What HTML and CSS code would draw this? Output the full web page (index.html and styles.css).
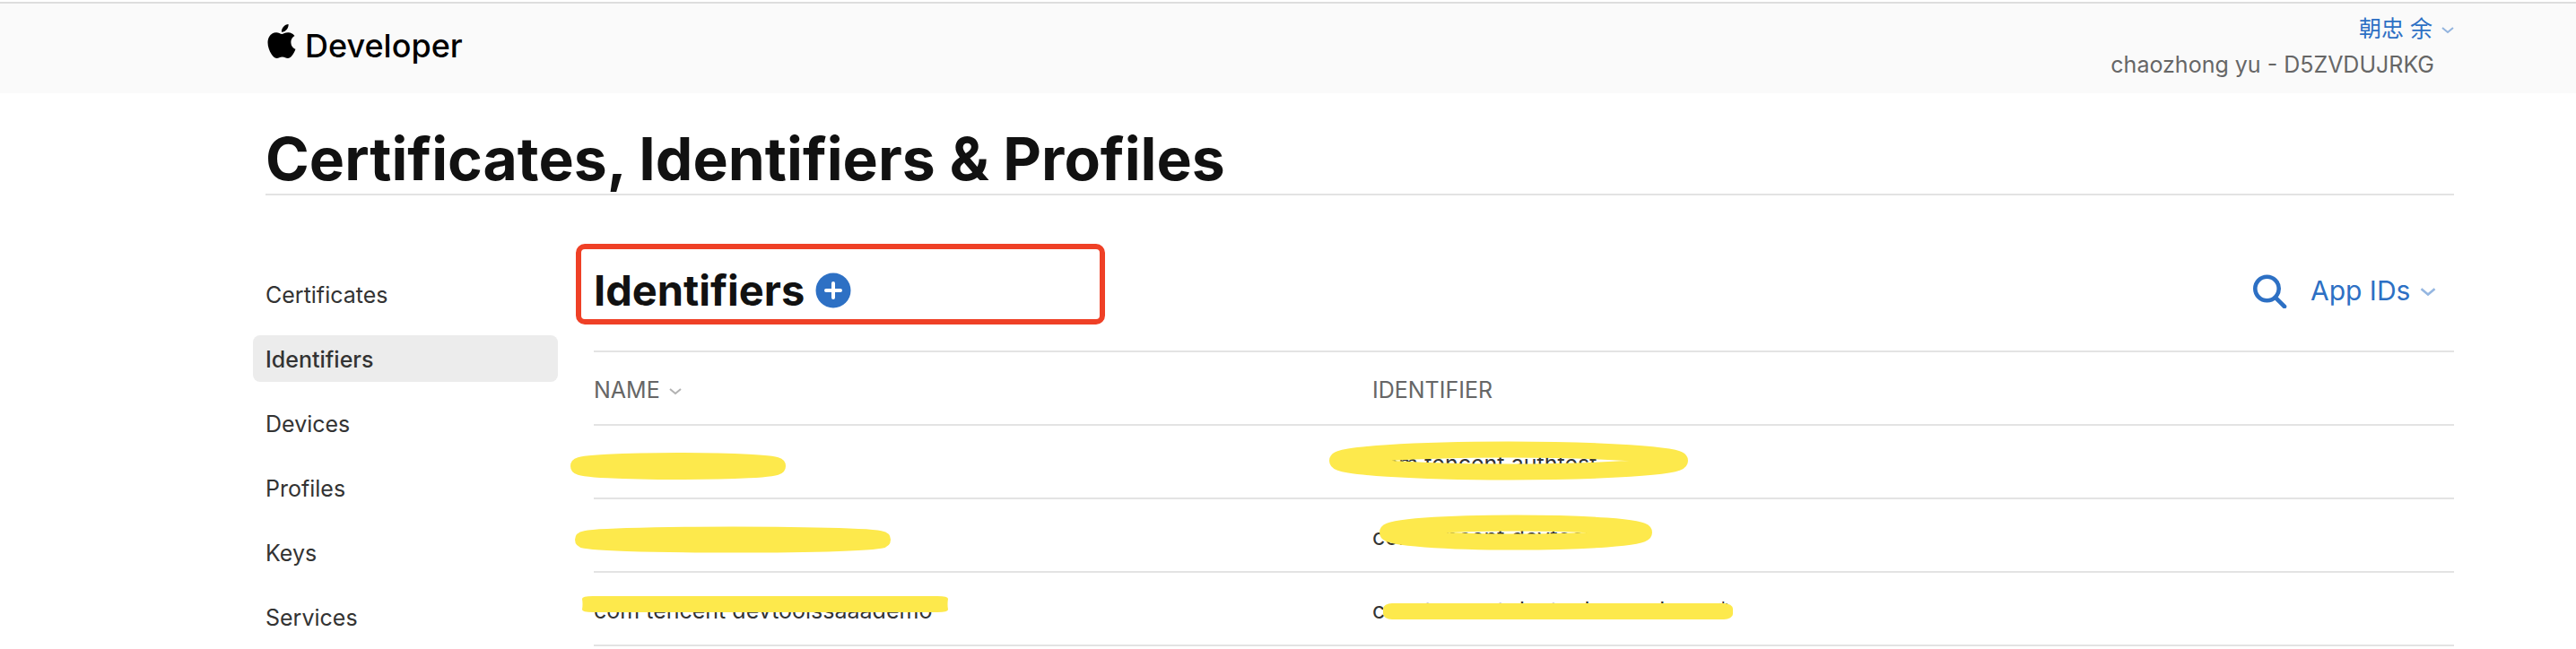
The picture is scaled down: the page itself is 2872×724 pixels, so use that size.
FILE: index.html
```html
<!DOCTYPE html>
<html lang="en">
  <head>
    <meta charset="UTF-8" />
    <title>Certificates, Identifiers &amp; Profiles - Apple Developer</title>
    <link rel="stylesheet" href="styles.css">
  </head>
  <body>
    <header class="topbar">
      <a class="brand" href="#">
        <svg class="brand-logo" viewBox="2 0 20 24" aria-hidden="true">
          <path d="M12.152 6.896c-.948 0-2.415-1.078-3.96-1.04-2.04.027-3.91 1.183-4.961 3.014-2.117 3.675-.546 9.103 1.519 12.09 1.013 1.454 2.208 3.09 3.792 3.039 1.52-.065 2.09-.987 3.935-.987 1.831 0 2.35.987 3.96.948 1.637-.026 2.676-1.48 3.676-2.948 1.156-1.688 1.636-3.325 1.662-3.415-.039-.013-3.182-1.221-3.22-4.857-.026-3.04 2.48-4.494 2.597-4.559-1.429-2.09-3.623-2.324-4.39-2.376-2-.156-3.675 1.09-4.61 1.09zM15.53 3.83c.843-1.012 1.4-2.427 1.245-3.83-1.207.052-2.662.805-3.532 1.818-.78.896-1.454 2.338-1.273 3.714 1.338.104 2.715-.688 3.559-1.701" />
        </svg>
        <span class="brand-name">Developer</span>
      </a>
      <div class="account">
        <button class="account-name" type="button">
          <span lang="zh">朝忠 余</span>
          <svg class="chevron" viewBox="0 0 14 8" aria-hidden="true"><path d="M1 1l6 5 6-5" /></svg>
        </button>
        <div class="account-team">chaozhong yu - D5ZVDUJRKG</div>
      </div>
    </header>

    <div class="page">
      <h1 class="page-title">Certificates, Identifiers &amp; Profiles</h1>

      <div class="columns">
        <nav class="sidebar" aria-label="Resources">
          <a class="sidebar-link" href="#">Certificates</a>
          <a class="sidebar-link active" href="#" aria-current="page">Identifiers</a>
          <a class="sidebar-link" href="#">Devices</a>
          <a class="sidebar-link" href="#">Profiles</a>
          <a class="sidebar-link" href="#">Keys</a>
          <a class="sidebar-link" href="#">Services</a>
        </nav>

        <main class="content">
          <div class="toolbar">
            <div class="toolbar-title">
              <h2>Identifiers</h2>
              <button class="add-button" type="button" aria-label="Add identifier">
                <svg viewBox="0 0 40 40" aria-hidden="true">
                  <circle cx="20" cy="20" r="19.5" />
                  <path d="M20 12v16M12 20h16" />
                </svg>
              </button>
              <span class="highlight-box"></span>
            </div>
            <div class="toolbar-actions">
              <button class="search-button" type="button" aria-label="Search">
                <svg viewBox="0 0 40 40" aria-hidden="true">
                  <circle cx="17.5" cy="18" r="13.2" />
                  <path d="M27 28l10 10" />
                </svg>
              </button>
              <label class="filter">
                <select aria-label="Identifier type">
                  <option>App IDs</option>
                </select>
                <svg class="chevron large" viewBox="0 0 14 8" aria-hidden="true"><path d="M1 1l6 5 6-5" /></svg>
              </label>
            </div>
          </div>

          <table class="identifiers">
            <colgroup>
              <col class="col-name">
              <col>
            </colgroup>
            <thead>
              <tr>
                <th scope="col">
                  <button class="sort-button" type="button">
                    NAME
                    <svg class="chevron" viewBox="0 0 14 8" aria-hidden="true"><path d="M1 1l6 5 6-5" /></svg>
                  </button>
                </th>
                <th scope="col">IDENTIFIER</th>
              </tr>
            </thead>
            <tbody>
              <tr>
                <td>
                  <svg class="mark mark-name-1" viewBox="0 0 240 30"><ellipse cx="120" cy="15" rx="111" ry="6" /></svg>
                </td>
                <td>
                  com.tencent.authtest
                  <svg class="mark mark-id-1" viewBox="0 0 400 44"><ellipse class="ring" cx="200" cy="22" rx="191" ry="12.5" /></svg>
                </td>
              </tr>
              <tr>
                <td>
                  <svg class="mark mark-name-2" viewBox="0 0 352 30"><ellipse cx="176" cy="15" rx="167" ry="5.5" /></svg>
                </td>
                <td>
                  com.tencent.devtools
                  <svg class="mark mark-id-2" viewBox="0 0 304 40"><ellipse class="ring" cx="152" cy="20" rx="143" ry="10.5" /></svg>
                </td>
              </tr>
              <tr>
                <td>
                  com tencent devtoolssaaademo
                  <svg class="mark mark-name-3" viewBox="0 0 408 18"><path class="bar" d="M0 3Q0 0 12 0H396Q408 0 408 3Q407 9 408 15Q408 18 396 18H12Q0 18 0 15Q1 9 0 3z" /></svg>
                </td>
                <td>
                  com.tencent.devtoolssaaademo.*
                  <svg class="mark mark-id-3" viewBox="0 0 390 18"><rect class="bar" width="390" height="18" rx="10" ry="6" /></svg>
                </td>
              </tr>
            </tbody>
          </table>
        </main>
      </div>
    </div>
  </body>
</html>
```
FILE: styles.css
```css
:root {
  --bg-color: #ffffff;
  --header-bg: #fafafa;
  --title-color: #111111;
  --text-color: #333333;
  --muted-color: #666666;
  --border-color: #e3e3e3;
  --active-bg: #ececec;
  --link-color: #2d70c4;
  --highlight: #ef4026;
  --marker: #fde94c;

  --page-left: 296px;
  --page-right: 136px;

  --text-base: 25px;
  --text-md: 30px;
  --text-lg: 36px;
  --text-xl: 47px;
  --text-xxl: 66px;
}

* {
  box-sizing: border-box;
}

body {
  margin: 0;
  padding-top: 2px;
  font-family: Inter, "Noto Sans CJK SC", sans-serif;
  font-size: var(--text-base);
  line-height: 40px;
  background-color: var(--bg-color);
  color: var(--text-color);
}

button,
select {
  padding: 0;
  border: none;
  background: none;
  font: inherit;
  color: inherit;
  cursor: pointer;
}

a {
  color: inherit;
  text-decoration: none;
}

h1,
h2 {
  margin: 0;
  color: var(--title-color);
  font-weight: 700;
}

.chevron {
  width: 14px;
  height: 8px;
  margin-top: 4px;
  fill: none;
  stroke: currentColor;
  stroke-width: 2;
  opacity: 0.5;
}

.chevron.large {
  width: 18px;
  height: 10px;
}

/* Header */
.topbar {
  display: flex;
  justify-content: space-between;
  align-items: flex-start;
  min-height: 102px;
  padding: 8px var(--page-right) 8px var(--page-left);
  border-top: 2px solid #dddddd;
  background-color: var(--header-bg);
}

.brand {
  display: flex;
  align-items: flex-start;
  gap: 10px;
  padding: 15px 0 0 2px;
  font-size: var(--text-lg);
  font-weight: 500;
  color: #000000;
}

.brand-logo {
  width: 32px;
  height: 38px;
}

.brand-name {
  margin-top: 4px;
}

.account {
  display: flex;
  flex-direction: column;
  align-items: flex-end;
}

.account-name {
  display: flex;
  align-items: center;
  gap: 10px;
  color: var(--link-color);
}

.account-team {
  padding-right: 22px;
  color: var(--muted-color);
}

/* Page */
.page {
  padding: 36px var(--page-right) 0 var(--page-left);
}

.page-title {
  padding-bottom: 2px;
  border-bottom: 2px solid var(--border-color);
  font-size: var(--text-xxl);
  line-height: 74px;
}

.columns {
  display: flex;
  gap: 40px;
}

.sidebar {
  display: flex;
  flex-direction: column;
  flex: 0 0 340px;
  gap: 20px;
  margin-left: -14px;
  padding-top: 84px;
}

.sidebar-link {
  padding: 7px 14px 5px;
  border-radius: 8px;
}

.sidebar-link.active {
  background-color: var(--active-bg);
  font-weight: 500;
}

.content {
  flex: 1;
  min-width: 0;
}

.toolbar {
  display: flex;
  justify-content: space-between;
  align-items: center;
  padding: 78px 20px 39px 0;
}

.toolbar-title {
  position: relative;
  display: flex;
  align-items: center;
  gap: 12px;
}

.toolbar-title h2 {
  font-size: var(--text-xl);
  line-height: 56px;
}

.add-button {
  width: 40px;
  height: 40px;
}

.add-button svg {
  display: block;
  fill: var(--link-color);
  stroke-linecap: round;
}

.add-button path {
  stroke: #ffffff;
  stroke-width: 4;
}

.highlight-box {
  position: absolute;
  top: -24px;
  left: -20px;
  width: 590px;
  height: 90px;
  border: 6px solid var(--highlight);
  border-radius: 10px;
}

.toolbar-actions {
  display: flex;
  align-items: center;
  gap: 26px;
  color: var(--link-color);
  font-size: var(--text-md);
}

.search-button {
  width: 40px;
  height: 40px;
}

.search-button svg {
  display: block;
  fill: none;
  stroke: currentColor;
  stroke-width: 4.6;
  stroke-linecap: round;
}

.filter {
  display: flex;
  align-items: center;
  gap: 10px;
}

.filter select {
  appearance: none;
}

/* Table */
.identifiers {
  width: 100%;
  border-collapse: separate;
  border-spacing: 0;
  border-top: 2px solid var(--border-color);
  table-layout: fixed;
}

.col-name {
  width: 868px;
}

.identifiers th,
.identifiers td {
  position: relative;
  height: 82px;
  padding: 3px 0 0;
  border-bottom: 2px solid var(--border-color);
  text-align: left;
}

.identifiers th {
  color: var(--muted-color);
  font-weight: 400;
}

.sort-button {
  display: flex;
  align-items: center;
  gap: 10px;
}

/* Marker strokes drawn over the cells */
.mark {
  position: absolute;
  fill: var(--marker);
  stroke: var(--marker);
  stroke-width: 18;
}

.mark .ring {
  fill: none;
}

.mark .bar {
  stroke: none;
}

.mark-name-1 {
  top: 30px;
  left: -26px;
  width: 240px;
}

.mark-name-2 {
  top: 30px;
  left: -21px;
  width: 352px;
}

.mark-name-3 {
  top: 26px;
  left: -13px;
  width: 408px;
}

.mark-id-1 {
  top: 17px;
  left: -48px;
  width: 400px;
}

.mark-id-2 {
  top: 17px;
  left: 8px;
  width: 304px;
}

.mark-id-3 {
  top: 34px;
  left: 12px;
  width: 390px;
}
```
